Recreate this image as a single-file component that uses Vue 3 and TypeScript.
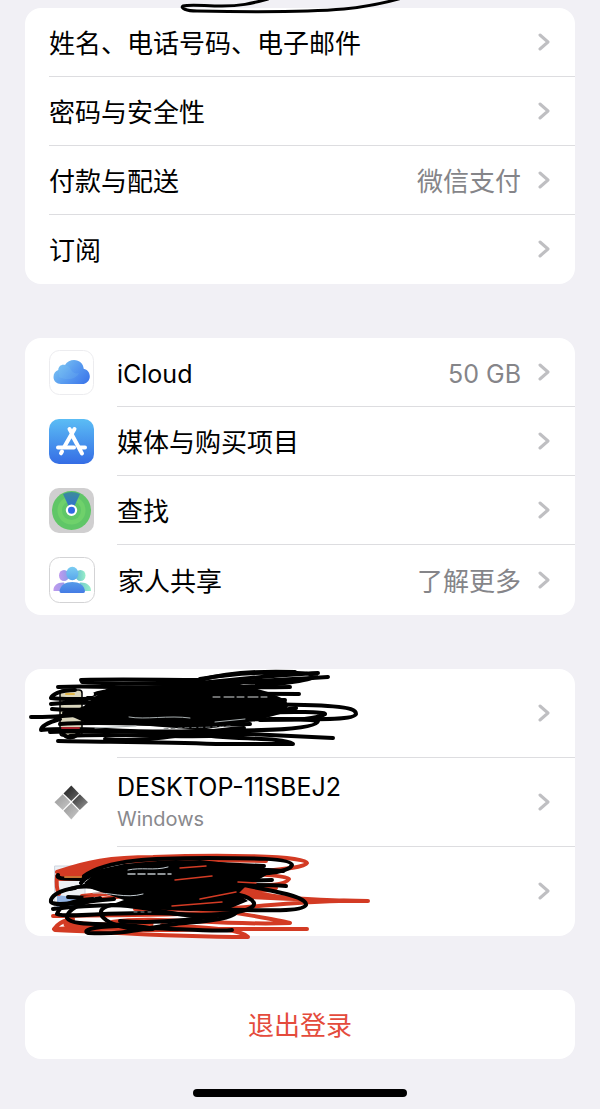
<script setup lang="ts">
interface Row {
  label: string
  value?: string
  icon?: 'cloud' | 'store' | 'find' | 'family'
  latin?: boolean
}

const accountRows: Row[] = [
  { label: '姓名、电话号码、电子邮件' },
  { label: '密码与安全性' },
  { label: '付款与配送', value: '微信支付' },
  { label: '订阅' },
]

const serviceRows: Row[] = [
  { label: 'iCloud', value: '50 GB', icon: 'cloud', latin: true },
  { label: '媒体与购买项目', icon: 'store' },
  { label: '查找', icon: 'find' },
  { label: '家人共享', value: '了解更多', icon: 'family' },
]
</script>

<template>
  <main class="page">
    <svg class="ink ink-top" viewBox="175 0 240 14" aria-hidden="true">
      <path d="M268 -1C250 4 240 6 222 6C205 6 190 4 183 6C180 8 186 11 197 11C250 12 310 12 344 9C364 7 385 3 402 -2" />
    </svg>

    <ul class="card">
      <li v-for="row in accountRows" :key="row.label">
        <a class="row" href="#">
          <span class="body">
            <span class="label">{{ row.label }}</span>
            <span v-if="row.value" class="value">{{ row.value }}</span>
            <svg class="chevron" viewBox="0 0 14 18"><path d="M3 2L11 9L3 16" /></svg>
          </span>
        </a>
      </li>
    </ul>

    <ul class="card">
      <li v-for="row in serviceRows" :key="row.label">
        <a class="row" :class="{ latin: row.latin }" href="#">
          <svg v-if="row.icon === 'cloud'" class="icon" viewBox="0 0 45 45">
            <defs>
              <linearGradient id="cloud-fill" x1="0" y1="0.2" x2="1" y2="0.8">
                <stop offset="0" stop-color="#7cc6f3" />
                <stop offset="0.5" stop-color="#5a9df0" />
                <stop offset="1" stop-color="#3d78ea" />
              </linearGradient>
            </defs>
            <rect x="0.5" y="0.5" width="44" height="44" rx="10" fill="#fff" stroke="#ececef" />
            <path fill="url(#cloud-fill)" d="M12 34C7.500 34 4.500 31 4.500 27C4.500 23.500 6.500 21 9.300 20C9.300 16.500 12.500 14 16 15C18 11.500 21.500 10 25 10C30.500 10 34.300 13.700 34.700 18.700C38.500 19.500 40.800 22.500 40.800 26.200C40.800 30.700 37.500 34 33 34Z" />
            <path d="M9.300 20C9.300 16.500 12.500 14 16 15C19 15.500 21 17.500 22 20C24 23 27 24 30 23C28 29 18 31 10 27Z" fill="#8ed4f3" opacity="0.15" />
          </svg>
          <svg v-else-if="row.icon === 'store'" class="icon" viewBox="0 0 45 45">
            <defs>
              <linearGradient id="store-fill" x1="0" y1="0" x2="0" y2="1">
                <stop offset="0" stop-color="#5bbdf5" />
                <stop offset="1" stop-color="#356de5" />
              </linearGradient>
            </defs>
            <rect width="45" height="45" rx="10" fill="url(#store-fill)" />
            <g fill="none" stroke="#fff" stroke-width="4" stroke-linecap="round">
              <path d="M20.500 10L23 14.500M25.500 10L15.500 27.500M13 32.500L12 34.300M22.500 15L33 34.500" />
              <path d="M9 28.500H25M31 28.500H36" />
            </g>
          </svg>
          <svg v-else-if="row.icon === 'find'" class="icon" viewBox="0 0 45 45">
            <defs>
              <linearGradient id="find-beam" x1="0" y1="0" x2="0" y2="1">
                <stop offset="0" stop-color="#3c8d9a" />
                <stop offset="1" stop-color="#2f72cf" />
              </linearGradient>
            </defs>
            <rect width="45" height="45" rx="10" fill="#d0cfd0" />
            <circle cx="22.500" cy="22.500" r="19.500" fill="#60c667" />
            <circle cx="22.500" cy="22.500" r="14" fill="#6fd16b" />
            <circle cx="22.500" cy="22.500" r="9.500" fill="#5fc767" />
            <path d="M14 6Q22.500 2 31 6L25 19H20Z" fill="url(#find-beam)" />
            <circle cx="22.500" cy="22.300" r="4.600" fill="#3269e3" stroke="#fff" stroke-width="2.200" />
          </svg>
          <svg v-else-if="row.icon === 'family'" class="icon icon-family" viewBox="0 0 46 46">
            <defs>
              <linearGradient id="family-left" x1="0" y1="0" x2="1" y2="0">
                <stop offset="0" stop-color="#c09aee" />
                <stop offset="1" stop-color="#8d9be8" />
              </linearGradient>
              <linearGradient id="family-right" x1="0" y1="0" x2="1" y2="0">
                <stop offset="0" stop-color="#66bfd0" />
                <stop offset="1" stop-color="#98efc7" />
              </linearGradient>
              <linearGradient id="family-head" x1="0" y1="0" x2="0" y2="1">
                <stop offset="0" stop-color="#7bcdf2" />
                <stop offset="1" stop-color="#58a6ec" />
              </linearGradient>
              <linearGradient id="family-body" x1="0" y1="0" x2="0" y2="1">
                <stop offset="0" stop-color="#579ce9" />
                <stop offset="1" stop-color="#447be4" />
              </linearGradient>
            </defs>
            <rect x="0.500" y="0.500" width="45" height="45" rx="10" fill="#fff" stroke="#d3d3d5" />
            <ellipse cx="15" cy="18.500" rx="5" ry="5.500" fill="url(#family-left)" />
            <path d="M4.500 34C4 28 9 25 15 25.500L19 34Z" fill="url(#family-left)" />
            <ellipse cx="31.500" cy="18.500" rx="5" ry="5.500" fill="url(#family-right)" />
            <path d="M42 34C42 28 37 25 31 25.500L27 34Z" fill="url(#family-right)" />
            <ellipse cx="23.300" cy="16.500" rx="6" ry="6.700" fill="url(#family-head)" />
            <path d="M12 36Q10.500 36 10.500 34C11.500 28 16.500 25 23.300 25C30 25 35 28 36 34Q36 36 34.500 36Z" fill="url(#family-body)" />
          </svg>
          <span class="body">
            <span class="label">{{ row.label }}</span>
            <span v-if="row.value" class="value">{{ row.value }}</span>
            <svg class="chevron" viewBox="0 0 14 18"><path d="M3 2L11 9L3 16" /></svg>
          </span>
        </a>
      </li>
    </ul>

    <ul class="card devices">
      <li>
        <a class="row" href="#">
          <span class="icon"></span>
          <span class="body"><svg class="chevron" viewBox="0 0 14 18"><path d="M3 2L11 9L3 16" /></svg></span>
        </a>
        <svg class="ink" viewBox="25 669 350 89" aria-hidden="true">
          <rect x="60" y="690" width="22" height="46" rx="3" fill="#d9d5bc" stroke-width="1.500" />
          <path stroke="#5c7fc4" stroke-width="2" d="M64 698H78" />
          <path stroke="#e3b74a" stroke-width="2" d="M66 694H74" />
          <path stroke="none" fill="#000" d="M96 696L108 688L200 683L240 684L268 692L286 700L288 706L284 713L262 719L240 724L200 730L150 726L120 724L84 722L66 714L84 706Z" />
          <g stroke-width="4">
            <path d="M81 680C122 679 162 680 200 680C230 672 268 671 295 672M82 682C150 687 220 681 286 682" />
            <path d="M58 687C96 685 131 689 162 687C230 680 272 675 318 673M200 679C250 670 304 672 316 675C318 679 281 685 238 687" />
            <path d="M188 683C218 683 262 681 328 677M120 690C190 686 244 688 290 687M75 690C59 690 52 695 51 698C75 701 120 697 174 693L299 694" />
            <path d="M51 704C80 701 102 704 140 704L285 700M52 709C80 713 170 704 244 704C332 705 356 706 356 714C354 721 307 719 270 719" />
            <path d="M31 717C66 717 89 713 115 712C190 705 250 717 296 708M60 719C46 723 41 727 41 730C83 726 125 734 196 731C239 731 317 731 318 721C306 719 230 717 190 724" />
            <path d="M82 716C140 712 210 720 260 713C292 711 326 712 325 714C318 719 299 720 260 720M50 732C101 729 174 734 250 734L333 738" />
            <path d="M58 741C111 742 163 742 216 744L293 744C281 737 235 740 193 734" />
            <path d="M61 731C67 741 76 738 80 731M105 739C150 744 192 731 244 728" />
            <path d="M60 724C110 720 170 727 250 724M64 713L110 709M86 700C92 690 120 690 150 688M70 736C110 733 150 737 210 736" />
          </g>
          <path stroke="#d7dadb" stroke-width="1" stroke-dasharray="7 4 10 3" d="M213 697H267" />
          <path stroke="#6d7172" stroke-width="1" stroke-dasharray="4 3" d="M164 729C185 727 203 728 230 726" />
          <path stroke="#a8afb0" stroke-width="1" d="M129 717C145 720 169 715 190 718M95 728L136 726M215 722L245 719" />
          <path stroke="#a51f29" stroke-width="2" d="M62 728H79" />
          <path stroke="#fff" stroke-width="4" d="M85 694H92" />
        </svg>
      </li>
      <li>
        <a class="row latin" href="#">
          <svg class="icon" viewBox="0 0 45 45">
            <defs>
              <linearGradient id="pane-top" x1="0" y1="0" x2="1" y2="1">
                <stop offset="0" stop-color="#202020" /><stop offset="1" stop-color="#656565" />
              </linearGradient>
              <linearGradient id="pane-left" x1="0" y1="0" x2="1" y2="1">
                <stop offset="0" stop-color="#989898" /><stop offset="1" stop-color="#c8c8c8" />
              </linearGradient>
              <linearGradient id="pane-right" x1="0" y1="0" x2="1" y2="1">
                <stop offset="0" stop-color="#333" /><stop offset="1" stop-color="#989898" />
              </linearGradient>
            </defs>
            <path fill="url(#pane-top)" d="M22.300 5.500L30 13.500L22.300 21L14.500 13.500Z" />
            <path fill="url(#pane-left)" d="M13.700 14.300L21.400 22L13.700 30L5.500 22.300Z" />
            <path fill="url(#pane-right)" d="M30.800 14.300L39 22.300L30.800 30L23.100 22Z" />
            <path fill="url(#pane-left)" d="M22.300 23L30 30.700L22.300 39.500L14.500 30.700Z" />
          </svg>
          <span class="body">
            <span class="label">DESKTOP-11SBEJ2<small class="kind">Windows</small></span>
            <svg class="chevron" viewBox="0 0 14 18"><path d="M3 2L11 9L3 16" /></svg>
          </span>
        </a>
      </li>
      <li>
        <a class="row" href="#">
          <span class="icon"></span>
          <span class="body"><svg class="chevron" viewBox="0 0 14 18"><path d="M3 2L11 9L3 16" /></svg></span>
        </a>
        <svg class="ink" viewBox="25 847 350 89" aria-hidden="true">
          <path fill="#edf0f4" stroke="#cdd4df" stroke-width="1" d="M55 866H85V907H55Z" />
          <path fill="#91b3e3" stroke="none" d="M57 895L72 897L82 902V907H57Z" />
          <g class="red">
            <path fill="#d33b24" stroke-width="2" d="M57 873C76 866 92 864 108 860L140 857L100 868L84 876L60 878Z" />
            <path d="M57 872C86 862 110 857 153 857C211 855 306 855 307 863C305 868 274 870 244 873M57 876C93 860 151 860 200 860L266 861" />
            <path d="M57 876C56 885 57 890 59 894M60 879L84 879" />
            <path d="M91 880C161 871 288 872 289 879C282 890 237 883 192 889M82 896C165 887 251 890 276 888C269 894 220 889 184 901" />
            <path d="M85 902C160 886 223 899 368 901C290 899 244 913 135 909M240 894C280 897 312 901 368 901" />
            <path fill="#d33b24" stroke-width="2" d="M236 891L268 894L300 899L262 898Z" />
            <path d="M53 916C110 914 171 917 225 911C240 914 276 919 290 923C214 926 155 915 112 922" />
            <path d="M73 919C62 920 56 926 54 929C101 926 154 933 200 929L307 929" />
            <path d="M55 930C110 932 163 937 248 937C240 929 211 928 162 925" />
            <path stroke-width="7" d="M67 924C93 925 109 928 150 924" />
          </g>
          <path stroke="none" fill="#000" d="M96 873L124 864L200 860L255 866L270 873L258 880L246 886L238 894L248 901L231 908L190 911L145 909L110 905L124 900L92 889L84 883Z" />
          <g stroke-width="4">
            <path d="M84 876C107 859 156 858 207 858C250 858 291 858 292 865C289 873 263 874 213 877" />
            <path d="M58 875C55 880 71 878 83 879M81 883C93 867 138 864 176 862L264 866M94 871C157 875 210 865 283 871" />
            <path d="M75 888C60 890 50 896 51 902C55 907 80 902 114 899M84 886C146 873 218 883 272 880M110 889C157 887 245 883 286 886" />
            <path d="M240 884C263 890 307 895 306 905C302 914 236 909 203 909C166 908 118 901 53 909" />
            <path d="M91 899C66 901 59 908 57 914C69 919 116 910 177 914C230 917 256 910 254 903C251 896 229 890 208 895" />
            <path d="M100 898C81 902 66 911 67 918C73 928 117 921 149 928C182 929 219 932 232 930" />
            <path d="M118 926C88 927 83 931 88 933C126 935 143 928 176 924C204 921 230 920 237 912M153 929C110 932 86 911 111 905C137 904 184 918 211 917" />
            <path d="M70 889C80 885 90 886 110 890M68 897L92 898M120 921C160 924 200 919 230 914" />
          </g>
          <path stroke="#bdc3c8" stroke-width="1.500" stroke-dasharray="7 3" d="M128 874H171" />
          <path stroke="#c3ccd2" stroke-width="1" d="M93 893C110 892 125 899 143 894M128 870C141 867 154 871 168 867" />
          <path stroke="#888b8d" stroke-width="1" stroke-dasharray="3 4" d="M134 912H155" />
          <path stroke="#d33b24" stroke-width="1.500" d="M84 897L106 895M175 880L212 876M200 899L236 892M172 906L222 902M180 868L206 866M238 882L256 883" />
          <path stroke="#c77233" stroke-width="2" d="M65 877H81" />
        </svg>
      </li>
    </ul>

    <button class="card sign-out" type="button">退出登录</button>
    <div class="home-bar"></div>
  </main>
</template>

<style>
body {
  margin: 0;
  background: #f1f0f5;
}
</style>

<style scoped>
.page {
  position: relative;
  display: flex;
  flex-direction: column;
  gap: 54px;
  padding: 8px 25px 12px;
  font-family: Inter, "Noto Sans CJK SC", sans-serif;
  font-size: 26px;
  line-height: 36px;
  color: #000;
  background: #f1f0f5;
}

.card {
  margin: 0;
  padding: 0;
  list-style: none;
  background: #fff;
  border-radius: 16px;
}

li {
  position: relative;
}

.row {
  display: flex;
  align-items: center;
  gap: 23px;
  padding-left: 24px;
  color: inherit;
  text-decoration: none;
}

.latin {
  font-size: 25px;
}

.body {
  flex: 1;
  align-self: stretch;
  display: flex;
  align-items: center;
  gap: 16px;
  min-height: 68px;
  padding-right: 24px;
  border-bottom: 1px solid #dddde0;
}

li:last-child .body {
  border-bottom-color: transparent;
}

.devices .body {
  min-height: 88px;
}

.label,
.value {
  padding-top: 4px;
}

.label {
  flex: 1;
}

.devices .label {
  padding: 0 0 2px;
}

.value {
  color: #858589;
}

.kind {
  display: block;
  font-size: 20px;
  line-height: 28px;
  color: #89898d;
}

.icon {
  flex: none;
  width: 45px;
  height: 45px;
  margin: 12px 0;
}

.icon-family {
  width: 46px;
  height: 46px;
}

.chevron {
  flex: none;
  width: 14px;
  height: 18px;
  margin-left: auto;
  fill: none;
  stroke: #bfbfc2;
  stroke-width: 3;
  stroke-linecap: round;
  stroke-linejoin: round;
}

.ink {
  position: absolute;
  top: 0;
  left: 0;
  width: 350px;
  height: 89px;
  overflow: visible;
  pointer-events: none;
  fill: none;
  stroke: #000;
  stroke-linecap: round;
  stroke-linejoin: round;
}

.ink-top {
  left: 175px;
  width: 240px;
  height: 14px;
  z-index: 1;
  overflow: hidden;
  stroke-width: 3;
}

.red {
  stroke: #d33b24;
  stroke-width: 4;
}

.sign-out {
  min-height: 69px;
  padding: 2px 0 0;
  border: 0;
  font: inherit;
  color: #e44b3c;
}

.home-bar {
  align-self: center;
  width: 39%;
  height: 8px;
  margin-top: -24px;
  border-radius: 4px;
  background: #000;
}
</style>
